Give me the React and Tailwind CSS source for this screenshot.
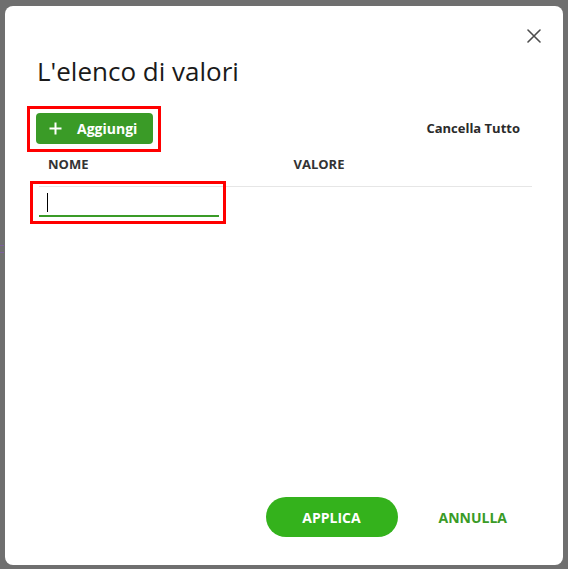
import React from "react";

const CloseIcon = () => (
    <svg width="14" height="14" viewBox="0 0 14 14" fill="none">
        <path d="M1 1L13 13M13 1L1 13" stroke="#4d4d4d" strokeWidth="1.6" strokeLinecap="round" />
    </svg>
);

const PlusIcon = () => (
    <svg width="13" height="13" viewBox="0 0 13 13" fill="none">
        <path d="M6.5 0.5V12.5M0.5 6.5H12.5" stroke="#ffffff" strokeWidth="2" />
    </svg>
);

const App = () => {
    return (
        <div
            className="relative w-[568px] h-[569px] bg-[#6f6f6f] pl-[5px] pt-[6px]"
            style={{ fontFamily: '"Open Sans", "Noto Sans", sans-serif' }}
        >
            {/* pezzi della pagina sotto */}
            <span className="absolute left-0 top-[245px] w-[4px] h-px bg-[#7d5f9e]" />
            <span className="absolute left-0 top-[252px] w-[4px] h-px bg-[#7d5f9e]" />

            <div className="w-[558px] h-[559px] bg-white rounded-[8px] flex flex-col">
                <div className="flex justify-end pt-[23px] pr-[22px]">
                    <button className="w-[14px] h-[14px]">
                        <CloseIcon />
                    </button>
                </div>

                <h1 className="mt-[12px] px-[32px] text-[26px] leading-[32px] text-[#1a1a1a] font-normal">
                    L'elenco di valori
                </h1>

                {/* toolbar */}
                <div className="mt-[26px] pl-[31px] pr-[32px] flex items-center justify-between">
                    <div className="relative">
                        <button className="h-[31px] w-[117px] rounded-[4px] bg-[#3a9b27] flex items-center pl-[13px] text-white text-[14px] font-bold">
                            <PlusIcon />
                            <span className="ml-[15px]">Aggiungi</span>
                        </button>
                        <span className="absolute -left-[9px] -right-[8px] -top-[7px] -bottom-[8px] border-[3px] border-[#ff0000]" />
                    </div>
                    <button className="pr-[11px] text-[13px] font-bold text-[#2b2b2b]">Cancella Tutto</button>
                </div>

                {/* tabella */}
                <div className="mt-[12px] ml-[34px] mr-[31px]">
                    <div className="grid grid-cols-2 border-b border-[#e6e6e6] pb-[14px] text-[13px] leading-[16px] font-bold text-[#333333]">
                        <div className="pl-[9px]">NOME</div>
                        <div className="pl-[8px]">VALORE</div>
                    </div>
                    <div className="relative w-[180px] h-[30px] border-b-2 border-[#3a9b27] pl-[8px] pt-[6px]">
                        <div className="w-px h-[19px] bg-black" />
                        <span className="absolute -left-[9px] -right-[7px] -top-[6px] -bottom-[9px] border-[3px] border-[#ff0000]" />
                    </div>
                </div>

                {/* azioni */}
                <div className="mt-auto pb-[28px] pr-[32px] flex justify-end items-center gap-[17px]">
                    <button className="w-[132px] h-[40px] rounded-full bg-[#34b21c] text-white text-[14px] font-bold">
                        APPLICA
                    </button>
                    <button className="h-[40px] px-[24px] text-[14px] font-bold text-[#3a9b27]">
                        ANNULLA
                    </button>
                </div>
            </div>
        </div>
    );
};

export default App;
